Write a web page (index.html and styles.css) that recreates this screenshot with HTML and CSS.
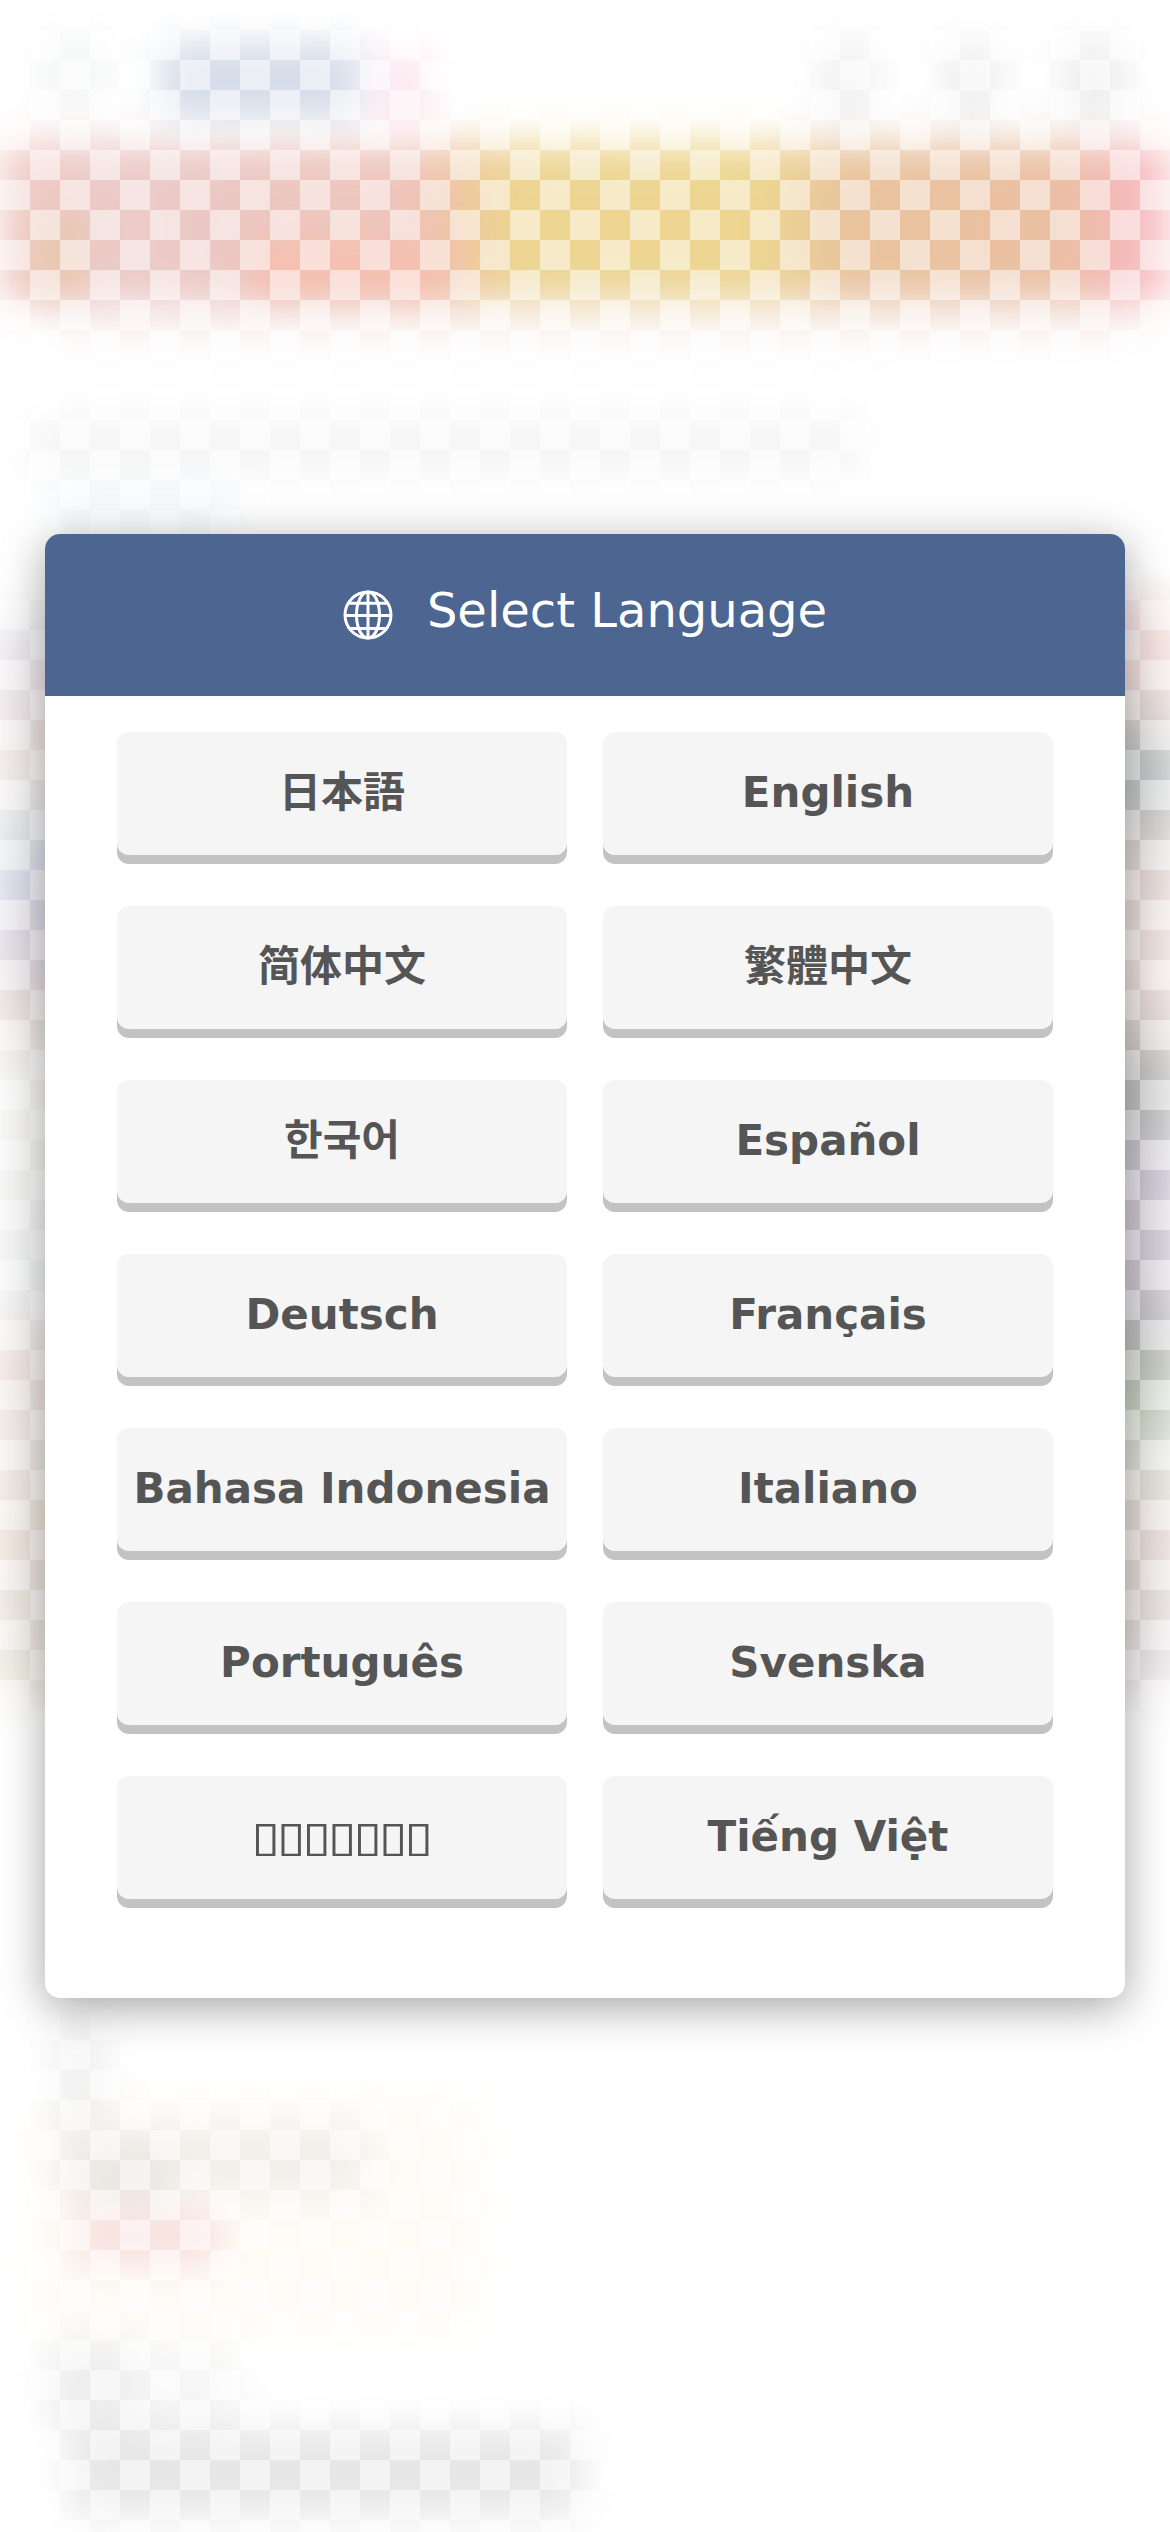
FILE: index.html
```html
<!DOCTYPE html>
<html lang="en">
<head>
<meta charset="utf-8">
<title>Select Language</title>
<link rel="stylesheet" href="styles.css">
</head>
<body>
<svg class="backdrop" viewBox="0 0 1170 2532" aria-hidden="true">
  <defs>
    <filter id="soft" filterUnits="userSpaceOnUse" x="-100" y="-100" width="1370" height="2732"><feGaussianBlur stdDeviation="21"/></filter>
    <filter id="fine" filterUnits="userSpaceOnUse" x="-100" y="-100" width="1370" height="2732"><feGaussianBlur stdDeviation="18"/></filter>
    <linearGradient id="band">
      <stop offset="0" stop-color="#f0c8c2"/><stop offset=".1" stop-color="#eacac8"/>
      <stop offset=".35" stop-color="#eec5bb"/><stop offset=".39" stop-color="#efc5a2"/>
      <stop offset=".43" stop-color="#ecd492"/><stop offset=".65" stop-color="#edd690"/>
      <stop offset=".72" stop-color="#e8c49d"/><stop offset=".91" stop-color="#eabfa3"/>
      <stop offset=".96" stop-color="#f5b8b8"/><stop offset="1" stop-color="#f6c0c6"/>
    </linearGradient>
    <linearGradient id="left" x2="0" y2="1">
      <stop offset="0" stop-color="#ececef"/><stop offset=".05" stop-color="#ece8ee"/><stop offset=".11" stop-color="#f0e3e4"/>
      <stop offset=".16" stop-color="#f0ebea"/><stop offset=".21" stop-color="#e0e5e9"/><stop offset=".25" stop-color="#d9d9ea"/>
      <stop offset=".31" stop-color="#e2dce3"/><stop offset=".37" stop-color="#eadfdf"/><stop offset=".42" stop-color="#f5f4f3"/>
      <stop offset=".64" stop-color="#f2f3f3"/><stop offset=".7" stop-color="#f0e2de"/><stop offset=".76" stop-color="#eee9e6"/>
      <stop offset=".84" stop-color="#efe5da"/><stop offset=".91" stop-color="#ebe5e1"/><stop offset="1" stop-color="#efeadc"/>
    </linearGradient>
    <linearGradient id="right" x2="0" y2="1">
      <stop offset="0" stop-color="#f5e5e3"/><stop offset=".07" stop-color="#f1dbd9"/><stop offset=".11" stop-color="#e3dad8"/>
      <stop offset=".135" stop-color="#bfc4c4"/><stop offset=".19" stop-color="#c2c5c5"/><stop offset=".235" stop-color="#e0d5d3"/>
      <stop offset=".34" stop-color="#eedfdc"/><stop offset=".4" stop-color="#dad0cf"/><stop offset=".44" stop-color="#bbbcbc"/>
      <stop offset=".48" stop-color="#bfc0c1"/><stop offset=".51" stop-color="#cac5d1"/><stop offset=".62" stop-color="#d0c8d4"/>
      <stop offset=".67" stop-color="#bcbdbf"/><stop offset=".72" stop-color="#c1c7b6"/><stop offset=".78" stop-color="#dcdfd7"/>
      <stop offset=".85" stop-color="#e7dad5"/><stop offset=".94" stop-color="#e2dddd"/><stop offset="1" stop-color="#efe9ec"/>
    </linearGradient>
    <pattern id="checks" width="60" height="60" patternUnits="userSpaceOnUse">
      <path fill="#fff" fill-opacity=".5" d="M0 0h30v30H0zM30 30h30v30H30z"/>
    </pattern>
  </defs>
  <g filter="url(#soft)">
    <rect x="40" y="35" width="70" height="80" fill="#f5f6f6"/>
    <rect x="2" y="144" width="1166" height="160" fill="url(#band)"/>
    <rect x="60" y="304" width="1080" height="40" fill="#faf5f4"/>
    <rect x="30" y="415" width="830" height="62" fill="#f5f5f5"/>
    <rect x="50" y="490" width="180" height="40" fill="#f1f7fa"/>
    <rect x="820" y="42" width="55" height="80" fill="#f0f0f0"/>
    <rect x="942" y="42" width="60" height="80" fill="#efefef"/>
    <rect x="1064" y="42" width="60" height="80" fill="#ececec"/>
    <rect x="-12" y="615" width="100" height="1080" fill="url(#left)"/>
    <rect x="1090" y="595" width="92" height="1100" fill="url(#right)"/>
    <rect x="38" y="2100" width="440" height="230" fill="#fefbf5"/>
    <rect x="55" y="2020" width="50" height="110" fill="#efefef"/>
    <rect x="55" y="2125" width="310" height="70" fill="#f1efea"/>
    <rect x="50" y="2340" width="90" height="90" fill="#ededed"/>
    <rect x="130" y="2345" width="110" height="80" fill="#f6f6f6"/>
    <rect x="70" y="2428" width="510" height="88" fill="#e6e6e6"/>
  </g>
  <g filter="url(#fine)">
    <rect x="160" y="42" width="200" height="78" fill="#d6dde9"/>
    <rect x="375" y="50" width="55" height="80" fill="#fce8f0"/>
    <rect x="40" y="220" width="40" height="70" fill="#e7c8a9"/>
    <rect x="250" y="242" width="200" height="50" fill="#f6bfad"/>
    <rect x="80" y="2155" width="90" height="45" fill="#e9e5e1"/>
    <rect x="75" y="2210" width="145" height="54" fill="#f8e0de"/>
  </g>
  <rect width="1170" height="2532" fill="url(#checks)"/>
</svg>
<main class="page">
  <section class="dialog">
    <header class="dialog-header">
      <svg class="globe" viewBox="0 0 50 50" aria-hidden="true">
        <circle cx="25" cy="25" r="23"/>
        <ellipse cx="25" cy="25" rx="11.500" ry="23"/>
        <path d="M25 2v46M2 25.500h46M6 13.300h38M6 38.500h38"/>
      </svg>
      <h1 class="title">Select Language</h1>
    </header>
    <div class="languages">
      <button class="language cjk" lang="ja">日本語</button>
      <button class="language" lang="en">English</button>
      <button class="language cjk" lang="zh-Hans">简体中文</button>
      <button class="language cjk" lang="zh-Hant">繁體中文</button>
      <button class="language cjk" lang="ko">한국어</button>
      <button class="language" lang="es">Español</button>
      <button class="language" lang="de">Deutsch</button>
      <button class="language" lang="fr">Français</button>
      <button class="language" lang="id">Bahasa Indonesia</button>
      <button class="language" lang="it">Italiano</button>
      <button class="language" lang="pt">Português</button>
      <button class="language" lang="sv">Svenska</button>
      <button class="language"><span class="boxes">▯▯▯▯▯▯▯</span></button>
      <button class="language" lang="vi">Tiếng Việt</button>
    </div>
  </section>
</main>
</body>
</html>
```
FILE: styles.css
```css
* { box-sizing: border-box; }

body {
  margin: 0;
  background: #fff;
  font-family: "DejaVu Sans", "Noto Sans CJK JP", sans-serif;
}

.backdrop {
  position: absolute;
  inset: 0;
  width: 1170px;
  height: 2532px;
}

.page {
  position: relative;
  display: flex;
  align-items: center;
  height: 2532px;
  padding: 0 45px;
}

.dialog {
  width: 100%;
  height: 1464px;
  overflow: hidden;
  border-radius: 15px;
  background: #fff;
  box-shadow: 0 9px 45px rgba(0, 0, 0, .36);
}

.dialog-header {
  display: flex;
  justify-content: center;
  gap: 34px;
  height: 162px;
  padding-top: 48px;
  border-bottom: 1px solid #56607a;
  background: #4c6591;
}

.globe {
  width: 50px;
  height: 50px;
  margin-top: 8px;
  fill: none;
  stroke: #fff;
  stroke-width: 3;
}

.title {
  margin: 0;
  color: #fff;
  font-size: 48px;
  font-weight: 400;
  line-height: 56px;
}

.languages {
  display: grid;
  grid-template-columns: 1fr 1fr;
  gap: 51px 36px;
  padding: 36px 72px;
}

.language {
  height: 123px;
  padding: 0 0 3px;
  border: 0;
  border-radius: 12px;
  background: #f5f5f5;
  box-shadow: 0 9px 0 #c3c3c3;
  color: #555;
  font-family: inherit;
  font-size: 42px;
  font-weight: 700;
  white-space: nowrap;
}

.language.cjk { padding-bottom: 10px; }

.boxes {
  display: inline-block;
  margin-right: 3px;
  font-weight: 400;
  letter-spacing: -2.7px;
  transform: scaleX(1.25);
}

.language:lang(zh-Hans) { font-family: "DejaVu Sans", "Noto Sans CJK SC", sans-serif; }
.language:lang(zh-Hant) { font-family: "DejaVu Sans", "Noto Sans CJK TC", sans-serif; }
.language:lang(ko) { font-family: "DejaVu Sans", "Noto Sans CJK KR", sans-serif; }
```
